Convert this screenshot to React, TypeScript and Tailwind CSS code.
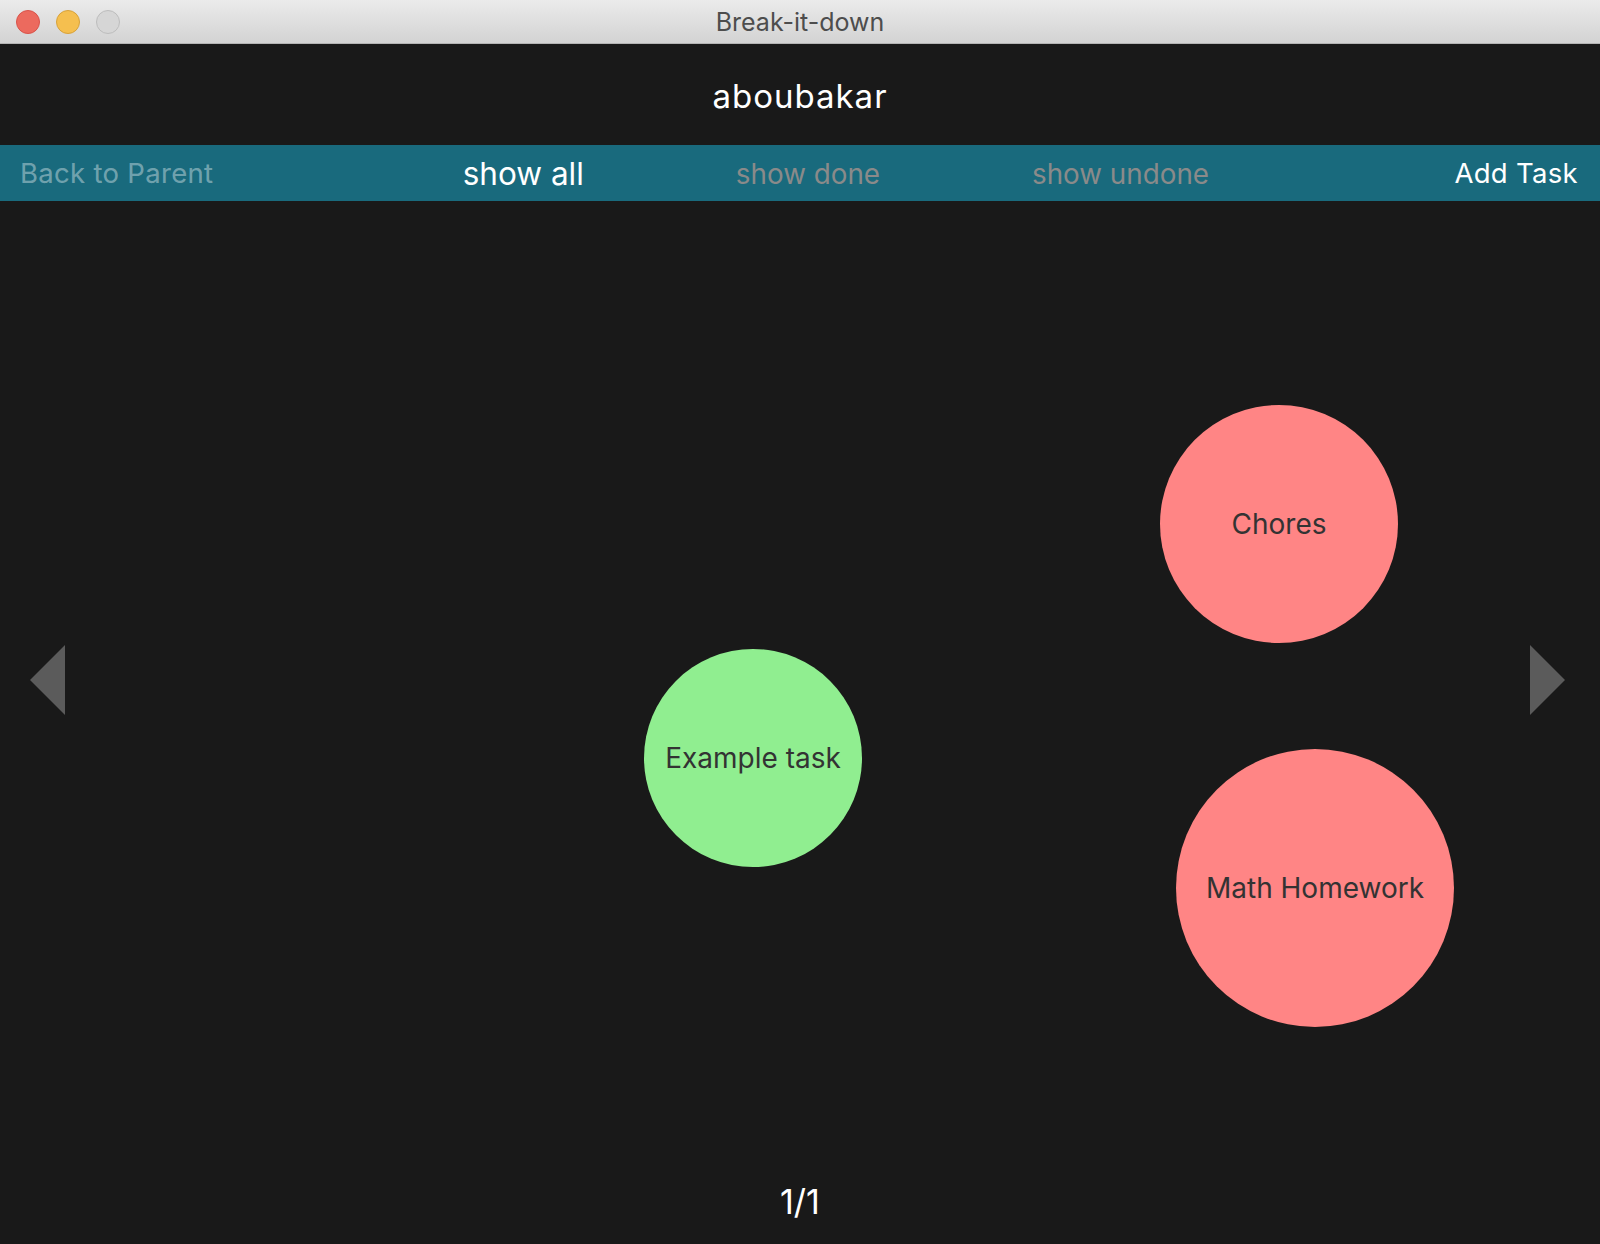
import { useState } from "react";

interface TaskBubble {
  id: string;
  label: string;
  done: boolean;
  left: number;
  top: number;
  size: number;
}

const tasks: TaskBubble[] = [
  { id: "example", label: "Example task", done: true, left: 644, top: 448, size: 218 },
  { id: "chores", label: "Chores", done: false, left: 1160, top: 204, size: 238 },
  { id: "math", label: "Math Homework", done: false, left: 1176, top: 548, size: 278 },
];

type Filter = "all" | "done" | "undone";

const font = { fontFamily: "Inter, 'Noto Sans', 'Liberation Sans', sans-serif" };

function TitleBar() {
  return (
    <div className="relative flex h-[44px] shrink-0 items-center justify-center border-b border-[#b4b4b4] bg-gradient-to-b from-[#ebebeb] to-[#d3d3d3]">
      <div className="absolute left-[16px] top-[10px] flex gap-[16px]">
        <span className="h-[24px] w-[24px] rounded-full border border-[#d9534a] bg-[#ec6a5e]" />
        <span className="h-[24px] w-[24px] rounded-full border border-[#d8a23a] bg-[#f5bf4f]" />
        <span className="h-[24px] w-[24px] rounded-full border border-[#bdbdbd] bg-[#d6d6d6]" />
      </div>
      <span className="pt-[3px] text-[25px] text-[#4d4d4d]">Break-it-down</span>
    </div>
  );
}

export default function App() {
  const [filter, setFilter] = useState<Filter>("all");

  const visible = tasks.filter((t) =>
    filter === "all" ? true : filter === "done" ? t.done : !t.done
  );

  const tabClass = (f: Filter) =>
    filter === f ? "text-[31.5px] text-white" : "pt-[3px] text-[27.8px] text-[#8a8a8a]";

  return (
    <div className="flex h-screen w-full flex-col overflow-hidden bg-[#191919]" style={font}>
      <TitleBar />

      <header className="flex h-[101px] shrink-0 items-center justify-center pt-[5px]">
        <h1 className="text-[33px] tracking-[1px] text-white">aboubakar</h1>
      </header>

      <nav className="flex h-[56px] shrink-0 items-center justify-between bg-[#196a7d] pl-[20px] pr-[22px] pt-[1px]">
        <button type="button" className="text-[27.5px] tracking-[0.3px] text-white/40">
          Back to Parent
        </button>
        <div className="flex items-center gap-[152px] pl-[4px]">
          <button type="button" onClick={() => setFilter("all")} className={tabClass("all")}>
            show all
          </button>
          <button type="button" onClick={() => setFilter("done")} className={tabClass("done")}>
            show done
          </button>
          <button type="button" onClick={() => setFilter("undone")} className={tabClass("undone")}>
            show undone
          </button>
        </div>
        <button type="button" className="text-[27.5px] tracking-[0.3px] text-white">
          Add Task
        </button>
      </nav>

      <main className="relative flex flex-1 items-center justify-between pl-[30px] pr-[35px]">
        <button type="button" aria-label="previous page">
          <svg width="35" height="70" viewBox="0 0 35 70">
            <polygon points="35,0 0,35 35,70" fill="#5b5b5b" />
          </svg>
        </button>

        {visible.map((t) => (
          <div
            key={t.id}
            className={`absolute flex items-center justify-center rounded-full ${
              t.done ? "bg-[#90ee90]" : "bg-[#ff8585]"
            }`}
            style={{ left: t.left, top: t.top, width: t.size, height: t.size }}
          >
            <span className="text-[28px] text-[#333333]">{t.label}</span>
          </div>
        ))}

        <button type="button" aria-label="next page">
          <svg width="35" height="70" viewBox="0 0 35 70">
            <polygon points="0,0 35,35 0,70" fill="#5b5b5b" />
          </svg>
        </button>
      </main>

      <footer className="flex h-[85px] shrink-0 items-center justify-center">
        <span className="text-[34px] text-white">1/1</span>
      </footer>
    </div>
  );
}
